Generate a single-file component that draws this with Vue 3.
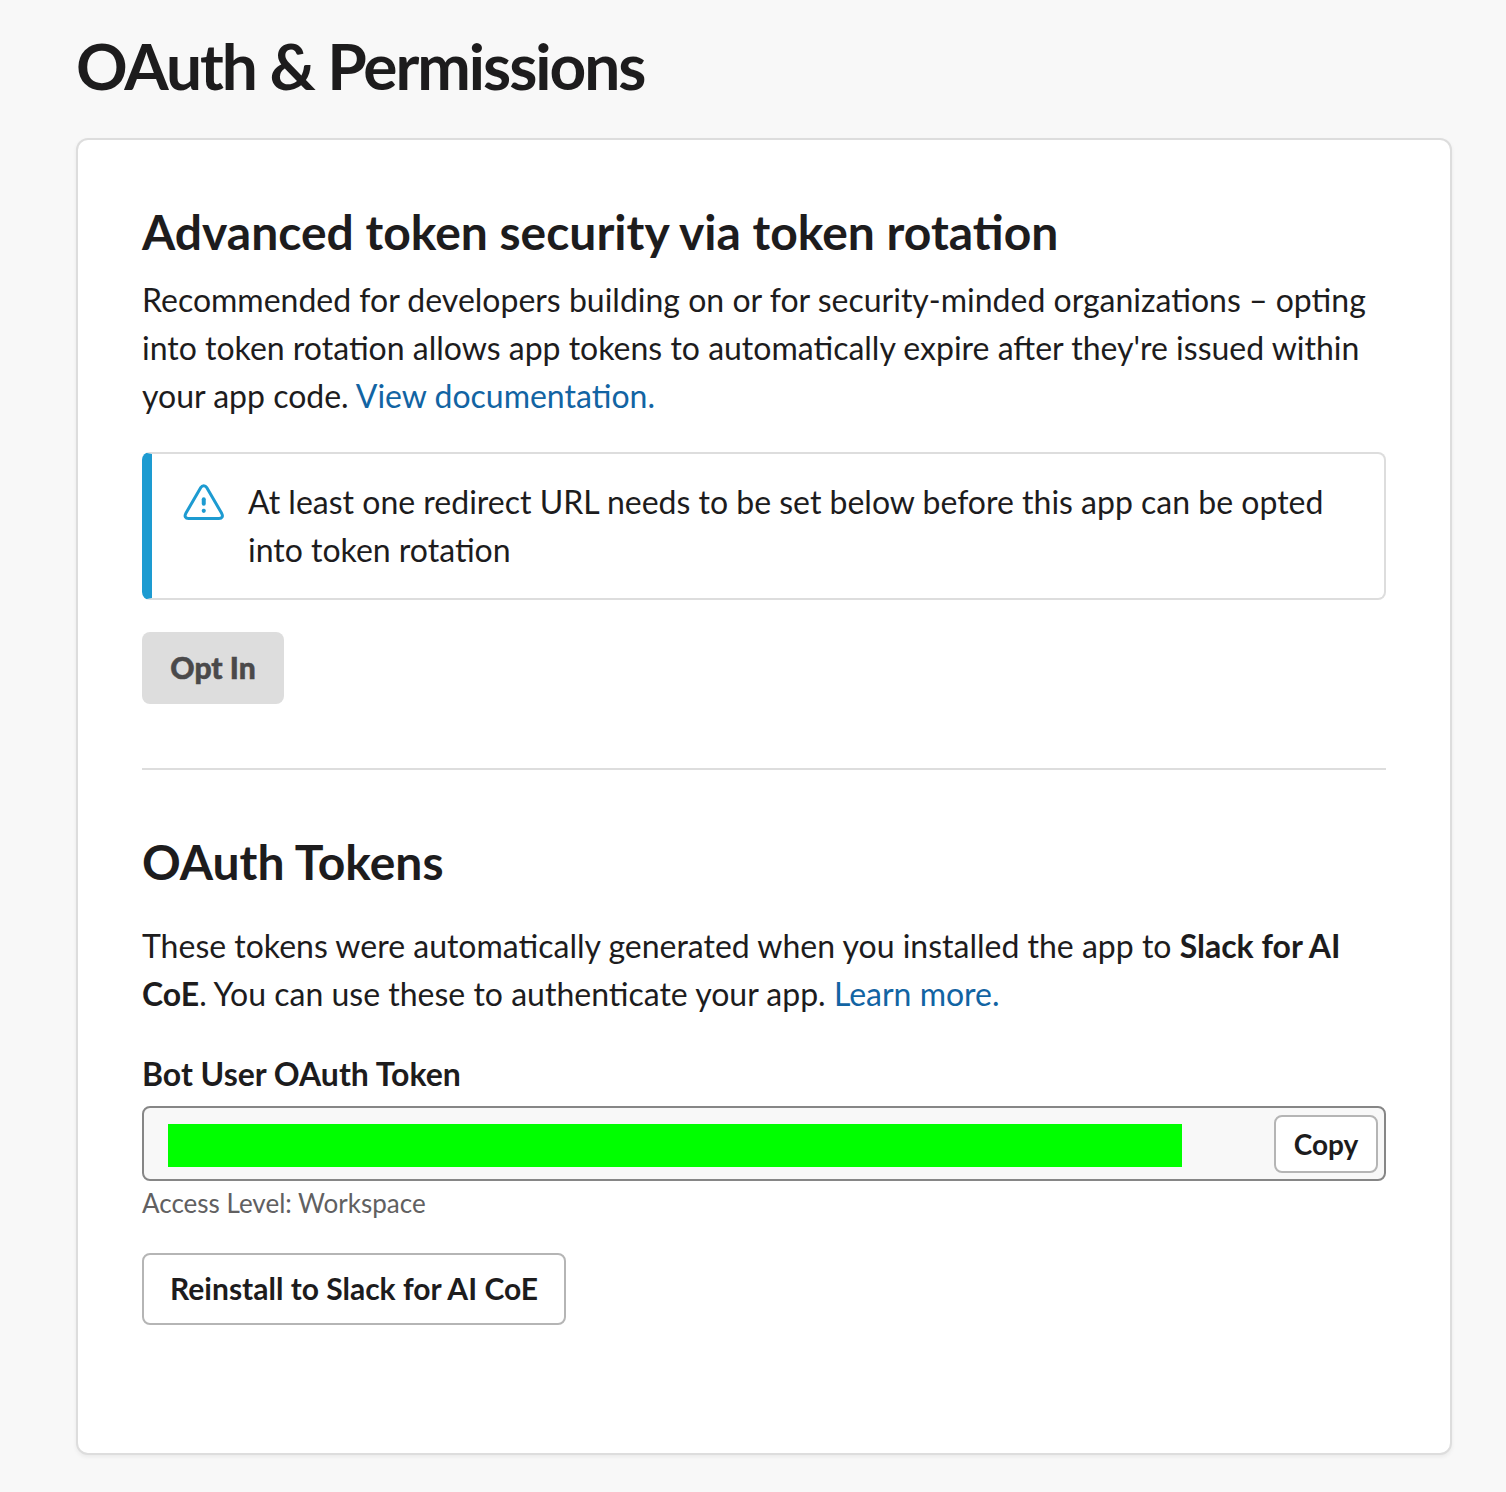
<script setup>
const workspace = 'Slack for AI CoE'
</script>

<template>
  <main class="page">
    <h1>OAuth &amp; Permissions</h1>
    <div class="card">
      <section class="rotation">
        <h2>Advanced token security via token rotation</h2>
        <p>Recommended for developers building on or for security-minded organizations – opting into token rotation allows app tokens to automatically expire after they're issued within your app code. <a>View documentation.</a></p>
        <div class="alert">
          <svg width="42" height="38" viewBox="0 0 42 38" fill="none" stroke="#1d9bd1" stroke-width="3" stroke-linejoin="round" stroke-linecap="round">
            <path d="M17.800 3.500 3 29C1 32.500 2.500 34.500 5.500 34.500H36C39 34.500 40.500 32.500 38.500 29L23.700 3.500C22.200 1 19.300 1 17.800 3.500Z" />
            <path d="M20.750 15.300V19.700" stroke-width="4" />
            <circle cx="20.750" cy="26.800" r="2.100" fill="#1d9bd1" stroke="none" />
          </svg>
          <p>At least one redirect URL needs to be set below before this app can be opted into token rotation</p>
        </div>
        <button class="btn disabled">Opt In</button>
      </section>
      <section class="tokens">
        <h2>OAuth Tokens</h2>
        <p>These tokens were automatically generated when you installed the app to <b>{{ workspace }}</b>. You can use these to authenticate your app. <a>Learn more.</a></p>
        <label>Bot User OAuth Token</label>
        <div class="field">
          <span class="mask"></span>
          <button class="copy">Copy</button>
        </div>
        <div class="hint">Access Level: Workspace</div>
        <button class="btn outline">Reinstall to {{ workspace }}</button>
      </section>
    </div>
  </main>
</template>

<style>
body { background: #f8f8f8; }
</style>

<style scoped>
.page { box-sizing: border-box; height: 1492px; padding: 34px 54px 0 76px; font-family: Lato, sans-serif; color: #1d1c1d; font-size: 32px; line-height: 48px; overflow: hidden; }
* { box-sizing: border-box; }
h1, h2, p { margin: 0; }
h1 { font-size: 64px; line-height: 64px; letter-spacing: -2.030px; font-weight: 700; }
.card { margin-top: 40px; height: 1317px; border: 2px solid #dddddd; border-radius: 12px; background: #fff; padding: 62px 64px; box-shadow: 0 2px 4px rgba(0, 0, 0, .06); }
h2 { font-size: 48px; line-height: 60px; font-weight: 700; }
a { color: #1264a3; }
.rotation { height: 568px; border-bottom: 2px solid #ddd; }
.rotation > p { margin-top: 14px; }
.alert { margin-top: 32px; height: 148px; border: 2px solid #ddd; border-left: 10px solid #1d9bd1; border-radius: 8px; display: flex; padding: 24px 29px 0 31px; }
.alert svg { flex: none; margin-top: 6px; }
.alert p { margin-left: 23px; }
button { font-family: inherit; font-weight: 700; color: #1d1c1d; background: #fff; padding: 0; display: block; }
.btn { height: 72px; font-size: 30px; border-radius: 8px; padding-bottom: 2px; }
.disabled { width: 142px; margin-top: 32px; border: 0; background: #ddd; color: #4a494a; font-weight: 900; -webkit-text-stroke: .5px #4a494a; }
.outline { width: 424px; margin-top: 32px; border: 2px solid #b5b5b5; }
.tokens { padding-top: 62px; }
.tokens p { margin-top: 30px; }
label { display: block; font-weight: 700; margin-top: 32px; }
.field { height: 75px; margin-top: 8px; border: 2px solid #868686; border-radius: 8px; background: #f8f8f8; display: flex; align-items: center; justify-content: space-between; padding: 0 6px 0 24px; }
.mask { width: 1014px; height: 43px; margin-top: 3px; background: #0f0; }
.copy { width: 104px; height: 58px; border: 2px solid #b5b5b5; border-radius: 8px; font-size: 28px; padding-top: 1px; }
.hint { font-size: 26px; line-height: 36px; margin-top: 4px; color: #616061; }
</style>
